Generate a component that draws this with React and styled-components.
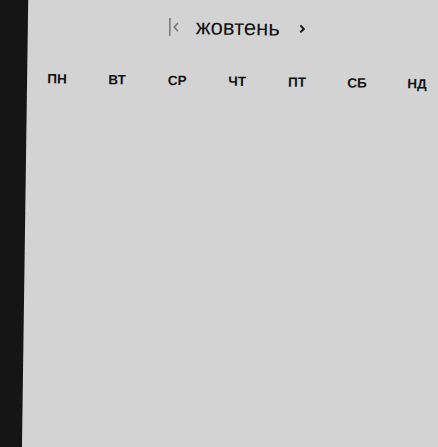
import React from "react";
import styled, { createGlobalStyle } from "styled-components";

const GlobalStyle = createGlobalStyle`
  html, body {
    margin: 0;
    padding: 0;
    background: #151515;
    overflow: hidden;
    height: 100%;
  }
  #root {
    height: 100%;
  }
`;

const Screen = styled.div`
  height: 447px;
  overflow: hidden;
  background: #151515;
`;

const Panel = styled.div`
  margin: -30px 0 0 25px;
  width: 440px;
  height: 520px;
  background: #d3d3d3;
  transform: rotate(0.8deg);
  transform-origin: 0 260px;
  padding-top: 40px;
  box-sizing: border-box;
  font-family: "Liberation Sans", Arial, sans-serif;
  color: #111;
`;

const Header = styled.div`
  display: flex;
  align-items: center;
  justify-content: center;
  gap: 15px;
  width: 420px;
  height: 30px;
`;

const NavButton = styled.button`
  border: 0;
  background: none;
  padding: 0;
  width: 14px;
  height: 20px;
  display: flex;
  align-items: center;
  justify-content: center;
  color: ${(p) => (p.$muted ? "#7a7a7a" : "#151515")};
`;

const Title = styled.div`
  font-size: 22px;
  line-height: 30px;
`;

const WeekRow = styled.div`
  display: grid;
  grid-template-columns: repeat(7, 60px);
  margin-top: 31px;
`;

const WeekDay = styled.div`
  text-align: center;
  font-size: 13.5px;
  font-weight: 700;
  line-height: 16px;
`;

const days = ["ПН", "ВТ", "СР", "ЧТ", "ПТ", "СБ", "НД"];

function App() {
  return (
    <Screen>
      <GlobalStyle />
      <Panel>
        <Header>
          <NavButton $muted aria-label="first">
            <svg width="12" height="20" viewBox="0 0 12 20" fill="none">
              <path d="M2 1v18" stroke="currentColor" strokeWidth="1.6" />
              <path d="M10 6 6.5 10l3.5 4" stroke="currentColor" strokeWidth="1.6" />
            </svg>
          </NavButton>
          <Title>жовтень</Title>
          <NavButton aria-label="next">
            <svg width="10" height="14" viewBox="0 0 10 14" fill="none">
              <path d="M3.5 3.5 7 7l-3.5 3.5" stroke="currentColor" strokeWidth="2" />
            </svg>
          </NavButton>
        </Header>
        <WeekRow>
          {days.map((d) => (
            <WeekDay key={d}>{d}</WeekDay>
          ))}
        </WeekRow>
      </Panel>
    </Screen>
  );
}

export default App;
